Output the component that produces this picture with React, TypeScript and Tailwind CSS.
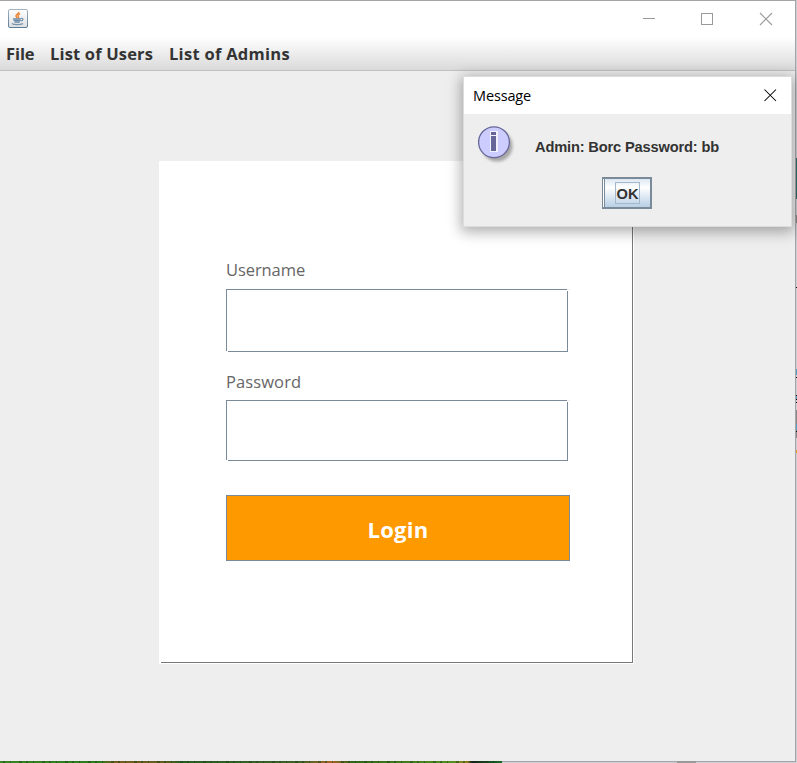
import React from "react";

function JavaIcon() {
  return (
    <svg width="20" height="19" viewBox="0 0 20 19" className="mt-[9px] ml-2 block">
      <defs>
        <linearGradient id="jbg" x1="0" y1="0" x2="0" y2="1">
          <stop offset="0" stopColor="#ffffff" />
          <stop offset="1" stopColor="#dcdfe2" />
        </linearGradient>
        <linearGradient id="jedge" x1="0" y1="0" x2="0" y2="1">
          <stop offset="0" stopColor="#a3b2bf" />
          <stop offset="1" stopColor="#5b7d97" />
        </linearGradient>
      </defs>
      <rect x="0.5" y="0.5" width="19" height="18" rx="1.5" fill="url(#jbg)" stroke="url(#jedge)" />
      <path d="M10.8 2.8C11.2 4.8 7.4 5.3 8 7.1C8.3 8 9.2 8.3 9 9.3M12 4.8C9.8 5.8 9.6 6.8 10.4 7.6C10.8 8.4 10.6 9 10 9.4" fill="none" stroke="#ee8a3c" strokeWidth="1.5" />
      <path d="M5 9.8H13M5.5 11.4H12.6M6.4 13H11.8" fill="none" stroke="#6b8ba6" strokeWidth="1.3" />
      <path d="M13 9.3C16 8.9 15.4 11.8 12.6 12" fill="none" stroke="#6b8ba6" strokeWidth="1.1" />
      <path d="M4 14.6C5.5 16 12 16 15 14.7" fill="none" stroke="#7894ab" strokeWidth="1.3" />
    </svg>
  );
}

function InfoIcon() {
  return (
    <svg width="40" height="40" viewBox="0 0 40 40" className="block">
      <defs>
        <filter id="soft" x="-30%" y="-30%" width="160%" height="160%">
          <feGaussianBlur stdDeviation="1.6" />
        </filter>
      </defs>
      <circle cx="19" cy="20" r="15.5" fill="#777" opacity="0.6" filter="url(#soft)" />
      <circle cx="16" cy="16.2" r="15.4" fill="#ccccff" stroke="#666699" strokeWidth="1.3" />
      <g shapeRendering="crispEdges">
        <path d="M12 5h8v21h-8z" fill="#f2f2ff" />
        <path d="M13 6h5v3h-5zM13 10h5v15h-5z" fill="#666699" />
      </g>
    </svg>
  );
}

function TextField({ h }: { h: number }) {
  return (
    <svg width="344" height={h} shapeRendering="crispEdges" className="block">
      <path d={`M0 0.5H341M0.5 0V${h - 1}M2 ${h - 0.5}H342M341.5 2V${h}`} stroke="#7a8a99" fill="none" />
      <path d="M341 0.5H344" stroke="#eeeeee" />
    </svg>
  );
}

function Dialog() {
  return (
    <div className="absolute left-[463px] top-[76px] flex h-[151px] w-[329px] flex-col border border-[#dcdcdc] bg-[#eeeeee] shadow-[0_3px_13px_2px_rgba(0,0,0,0.32)]">
      <div className="flex h-[37px] shrink-0 items-center justify-between bg-white pr-[14px] pl-[9px]">
        <span className="font-['Open_Sans',sans-serif] text-[14.5px] tracking-[-0.14px] text-black">Message</span>
        <svg width="13" height="13" viewBox="0 0 13 13" className="mb-px">
          <path d="M0.5 0.5L12 12M12 0.5L0.5 12" stroke="#000" strokeWidth="1.05" />
        </svg>
      </div>
      <div className="flex h-[51px] pt-3 pl-[14px]">
        <InfoIcon />
        <span className="mt-[11px] ml-[17px] font-['Liberation_Sans',Arial,sans-serif] text-[14.67px] leading-[20px] font-bold tracking-[-0.17px] whitespace-nowrap text-[#333333]">
          Admin: Borc Password: bb
        </span>
      </div>
      <button className="mt-3 ml-[138px] flex h-8 w-[50px] border-y-2 border-r-2 border-l border-[#7a8a99] bg-white p-0 pl-px">
        <span className="flex h-[28px] w-[46px] items-center justify-center border-l border-[#7a8a99] bg-linear-to-b from-[#dde8f3] via-white via-30% to-[#b8cfe5]">
          <span className="flex h-[22px] w-[25px] items-center justify-center border border-[#a3b8cc] pt-[3px] font-['Liberation_Sans',Arial,sans-serif] text-[14.67px] leading-none font-bold text-[#333333]">
            OK
          </span>
        </span>
      </button>
    </div>
  );
}

export default function App() {
  return (
    <div className="relative flex h-[763px] w-[797px] flex-col overflow-hidden bg-[#cccdd1]">
      <div className="flex h-[762px] w-[796px] flex-col border-t border-r border-b border-[#a5a5a9] bg-[#eeeeee]">
        <div className="flex h-[36px] shrink-0 justify-between bg-white">
          <div className="-mt-px"><JavaIcon /></div>
          <svg width="160" height="36" shapeRendering="crispEdges">
            <path d="M8 17.5H20M66.5 12.5H77.5V23.5H66.5Z" fill="none" stroke="#999999" />
            <path d="M125 12L137 24M137 12L125 24" shapeRendering="auto" stroke="#999999" strokeWidth="1.1" />
          </svg>
        </div>
        <div className="flex h-[34px] shrink-0 border-b border-[#c0c0c0] bg-linear-to-b from-white to-[#dadada] pl-[6px] font-['Open_Sans',sans-serif] text-[16.5px] leading-[34px] font-bold whitespace-nowrap text-[#333333]">
          <span className="w-11 tracking-[-0.1px]">File</span>
          <span className="w-[119px] tracking-[0.16px]">List of Users</span>
          <span className="tracking-[0.28px]">List of Admins</span>
        </div>
        <div className="mt-[90px] ml-[159px] flex h-[503px] w-[475px] flex-col border-r border-b border-white bg-white">
          <div className="ml-[2px] flex h-[502px] w-[472px] flex-col border-r border-b border-[#777777] pl-[65px] font-['Open_Sans',sans-serif]">
            <label className="mt-[97px] h-[31px] text-[16.5px] leading-6 tracking-[-0.08px] text-[#666666]">Username</label>
            <TextField h={63} />
            <label className="mt-[18px] h-[30px] text-[16.5px] leading-6 tracking-[0.1px] text-[#666666]">Password</label>
            <TextField h={61} />
            <button className="mt-[34px] h-[66px] w-[344px] border border-[#7a8a99] bg-[#ff9900] pt-[2px] text-[22px] font-bold tracking-[0.3px] text-white">
              Login
            </button>
          </div>
        </div>
      </div>
      <svg width="797" height="2" shapeRendering="crispEdges" className="absolute bottom-0 left-0">
        <defs>
          <linearGradient id="grass">
            <stop offset="0" stopColor="#3b8424" />
            <stop offset="0.2" stopColor="#2f7a20" />
            <stop offset="0.23" stopColor="#765c22" />
            <stop offset="0.33" stopColor="#625d20" />
            <stop offset="0.36" stopColor="#285e24" />
            <stop offset="0.6" stopColor="#3c632a" />
            <stop offset="0.66" stopColor="#a96625" />
            <stop offset="0.7" stopColor="#2f651e" />
            <stop offset="0.9" stopColor="#539022" />
            <stop offset="0.93" stopColor="#938119" />
            <stop offset="0.94" stopColor="#14241b" />
            <stop offset="1" stopColor="#1c6725" />
          </linearGradient>
        </defs>
        <rect width="502" height="2" fill="url(#grass)" />
        <path d="M3 1H502" stroke="#173d14" strokeWidth="2" strokeDasharray="2 5 1 8 3 4" opacity="0.45" />
        <path d="M677 1H696" stroke="#999" strokeWidth="2" />
      </svg>
      <svg width="2" height="310" shapeRendering="crispEdges" className="absolute top-[150px] right-0">
        <path d="M1.5 8V49" stroke="#316b68" />
        <path d="M1.5 65V73M1.5 260V288" stroke="#888" />
        <path d="M1.5 137V138M1.5 227V228M1.5 245V246M1.5 249V250M1.5 252V253M1.5 281V282" stroke="#111" />
        <path d="M1.5 219V225M1.5 246V249M1.5 274V280" stroke="#579ec6" />
        <path d="M1.5 300V303" stroke="#eb9e35" />
      </svg>
      <Dialog />
    </div>
  );
}
